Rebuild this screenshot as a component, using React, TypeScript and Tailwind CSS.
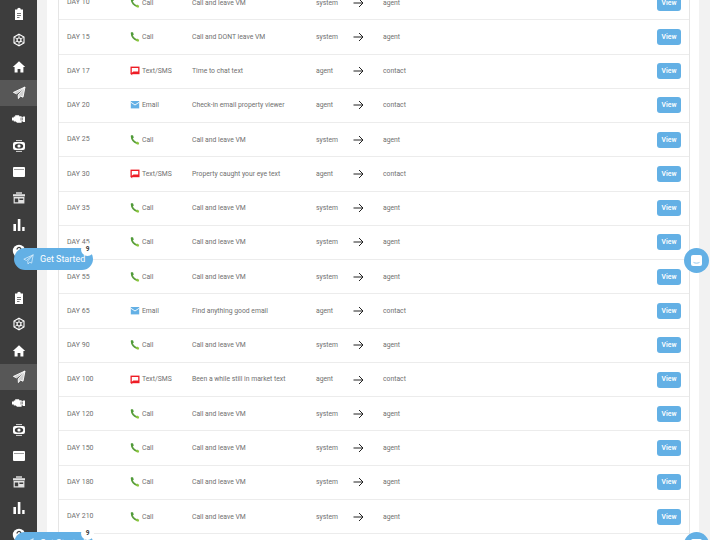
import React from 'react'

const rows = [
  ['DAY 10', 'call', 'Call and leave VM', 'system', 'agent'],
  ['DAY 15', 'call', 'Call and DONT leave VM', 'system', 'agent'],
  ['DAY 17', 'sms', 'Time to chat text', 'agent', 'contact'],
  ['DAY 20', 'email', 'Check-in email property viewer', 'agent', 'contact'],
  ['DAY 25', 'call', 'Call and leave VM', 'system', 'agent'],
  ['DAY 30', 'sms', 'Property caught your eye text', 'agent', 'contact'],
  ['DAY 35', 'call', 'Call and leave VM', 'system', 'agent'],
  ['DAY 45', 'call', 'Call and leave VM', 'system', 'agent'],
  ['DAY 55', 'call', 'Call and leave VM', 'system', 'agent'],
  ['DAY 65', 'email', 'Find anything good email', 'agent', 'contact'],
  ['DAY 90', 'call', 'Call and leave VM', 'system', 'agent'],
  ['DAY 100', 'sms', 'Been a while still in market text', 'agent', 'contact'],
  ['DAY 120', 'call', 'Call and leave VM', 'system', 'agent'],
  ['DAY 150', 'call', 'Call and leave VM', 'system', 'agent'],
  ['DAY 180', 'call', 'Call and leave VM', 'system', 'agent'],
  ['DAY 210', 'call', 'Call and leave VM', 'system', 'agent'],
]

const labels: Record<string, string> = { call: 'Call', sms: 'Text/SMS', email: 'Email' }

const TypeIcon = ({ type }: { type: string }) => {
  if (type === 'call') {
    return (
      <svg width="10" height="10" viewBox="0 0 10 10" fill="none" strokeLinecap="round">
        <path d="M1.6 1.4C1.8 4.6 3.8 7 7 8.2" stroke="#5a9e3c" strokeWidth="1.7" />
        <path d="M.8.4 3 .2 3.8 2.8 1.6 3.6Z" fill="#4f9a3a" />
        <path d="M5.8 8.2 7 6.4 9.2 7.8 8.8 9.4 7 9.4Z" fill="#8cc63f" />
      </svg>
    )
  }
  if (type === 'sms') {
    return (
      <svg width="10" height="10" viewBox="0 0 10 10">
        <rect x="0.5" y="0.6" width="9" height="7.6" fill="#ee1c25" />
        <path d="M1.8 2H8.2V5.6H3.4L1.8 6.8Z" fill="#fff" />
        <path d="M0.5 7.6 2.2 7.6V9.4Z" fill="#ee1c25" />
      </svg>
    )
  }
  return (
    <svg width="10" height="10" viewBox="0 0 10 10">
      <rect x="0.8" y="1" width="8.4" height="7.4" fill="#63b0e5" />
      <path d="M0.8 2.2 5 5 9.2 2.2" fill="none" stroke="#fff" strokeWidth="0.9" />
    </svg>
  )
}

const Arrow = () => (
  <svg width="11" height="10" viewBox="0 0 11 10" fill="none" stroke="#222" strokeWidth="1">
    <path d="M0.5 5H10M6 1l4 4-4 4" />
  </svg>
)

const navIcons = [
  // clipboard
  <g key="a"><path d="M3 2.5h2.2a1.8 1.8 0 0 1 3.6 0H11V13H3Z" fill="#fff" /><path d="M5 6.5h4M5 8.5h4M5 10.5h2.5" stroke="#3d3d3d" strokeWidth="0.7" /></g>,
  // hub
  <g key="b" fill="none" stroke="#fff"><path d="M7 1.2 12 4v6l-5 2.8L2 10V4Z" strokeWidth="1.1" /><circle cx="7" cy="7" r="2" strokeWidth="1.2" /><path d="M7 1v4M2 4l3.4 2M12 4 8.6 6M2 10l3.4-2M12 10 8.6 8M7 13V9" strokeWidth="0.8" /></g>,
  // home
  <path key="c" d="M7 1.2 13.2 7H11.4V12.6H8.4V9H5.6V12.6H2.6V7H0.8Z" fill="#fff" />,
  // plane
  <g key="d" fill="none" stroke="#fff" strokeWidth="0.9"><path d="M13 1 1.4 6.4l3.2 1.4L13 1 6.2 9l.2 3.6 2-2.6 2.6 1.2Z" fill="#cfcfcf" /></g>,
  // engine
  <g key="e"><path fill="#fff" d="M3.2 3.2h4v1h2.4v1h1.2v-.6h2.2v5.4h-2.2v-.8H9.6v1.6H5L3.8 9.4H1.8V8.4H0V5.4h1.8v-1h1.4Z" /><path d="M9 5.6v3M10.4 5.8v2.6" stroke="#3d3d3d" strokeWidth="0.6" /></g>,
  // eye
  <g key="f"><rect x="1" y="3" width="12" height="8" rx="2" fill="#fff" /><ellipse cx="7" cy="7" rx="4.2" ry="2.6" fill="#3d3d3d" /><circle cx="7" cy="7" r="1.6" fill="#fff" /><path d="M4 1.6h6M4 12.4h6" stroke="#fff" strokeWidth="0.8" /></g>,
  // window
  <path key="g" fillRule="evenodd" d="M2 2h10a1 1 0 0 1 1 1v8a1 1 0 0 1-1 1H2a1 1 0 0 1-1-1V3a1 1 0 0 1 1-1Zm0 2v.5h10V4Z" fill="#fff" />,
  // store
  <g key="h" fill="#fff"><path d="M4 1.4h6v1.2H4Z" /><path d="M1 3.2h12v2.2H1Z" opacity="0.85" /><path fillRule="evenodd" d="M1.6 6h10.8v6.6H1.6Zm1.2 1.4v3.8h3.4V7.4Zm4.6 0v1.6h3.8V7.4Z" opacity="0.85" /></g>,
  // bars
  <g key="i" fill="#fff"><rect x="1.4" y="6" width="2.6" height="7" /><rect x="5.8" y="1" width="2.6" height="12" /><rect x="10.2" y="9" width="2.4" height="4" /></g>,
  // help
  <g key="j"><circle cx="7" cy="7" r="6.2" fill="#fff" /><path d="M5 5.4a2 2 0 1 1 3 1.8c-.7.4-1 .8-1 1.6" fill="none" stroke="#3d3d3d" strokeWidth="1.3" /><circle cx="7" cy="10.6" r=".8" fill="#3d3d3d" /></g>,
]

const NavSet = () => (
  <div className="flex flex-col">
    {navIcons.map((icon, i) => (
      <div key={i} className={`h-[26.3px] flex items-center justify-center ${i === 3 ? 'bg-[#575757]' : ''}`}>
        <svg width="14" height="14" viewBox="0 0 14 14">{icon}</svg>
      </div>
    ))}
  </div>
)

const GetStarted = ({ top }: { top: string }) => (
  <div className={`absolute left-[14px] ${top} h-[22px] w-[79px] rounded-full bg-[#63b0e5] flex items-center pl-[9px] text-white text-[9px] font-['Roboto',sans-serif]`}>
    <svg width="11" height="11" viewBox="0 0 14 14" fill="none" stroke="#d8ecfa" strokeWidth="1" className="mr-[6px]">
      <path d="M13 1 1 6.6l3.4 1.6L13 1 6 9l.4 3.8 2-2.4 2.6 1.2Z" />
    </svg>
    <span className="pt-[2px]">Get Started</span>
    <span className="absolute -top-[5px] -right-[1px] w-[13px] h-[13px] rounded-full bg-white text-[#333] text-[6.5px] font-bold flex items-center justify-center">9</span>
  </div>
)

const ChatBubble = ({ top }: { top: string }) => (
  <div className={`absolute left-[684px] ${top} w-[25px] h-[25px] rounded-full bg-[#63b0e5] flex items-center justify-center`}>
    <svg width="13" height="13" viewBox="0 0 13 13">
      <rect x="1" y="1" width="11" height="11" rx="2" fill="#fff" />
      <path d="M3.5 8.4c1.6 1 4.4 1 6 0" fill="none" stroke="#63b0e5" strokeWidth="0.7" />
    </svg>
  </div>
)

export default function App() {
  return (
    <div className="relative w-[720px] h-[540px] overflow-hidden flex bg-white text-[6.8px] text-[#6f6f6f] font-['Roboto',sans-serif]">
      <div className="w-[37px] shrink-0 bg-[#3d3d3d] pt-[1px] flex flex-col gap-[21px]">
        <NavSet />
        <NavSet />
      </div>
      <div className="w-[10px] shrink-0 bg-[#f2f2f2]" />
      <div className="w-[652px] shrink-0 pl-[11px] pr-[9px]">
        <div className="-mt-[14px] border-l border-r border-[#e5e5e5]">
          {rows.map(([day, type, desc, from, to]) => (
            <div key={day} className="h-[34.27px] border-b-[1.5px] border-[#ececec] grid grid-cols-[63px_62px_124px_37px_30px_274px_auto] items-center pl-[8px]">
              <span className="text-[7px]">{day}</span>
              <span className="flex items-center gap-[2px]">
                <TypeIcon type={type} />
                {labels[type]}
              </span>
              <span>{desc}</span>
              <span>{from}</span>
              <Arrow />
              <span>{to}</span>
              <span className="w-[24px] h-[16px] rounded-[3px] bg-[#63b0e5] text-white font-semibold flex items-center justify-center">View</span>
            </div>
          ))}
        </div>
      </div>
      <div className="w-[11px] shrink-0 bg-[#f2f2f2]" />
      <GetStarted top="top-[248px]" />
      <GetStarted top="top-[532px]" />
      <ChatBubble top="top-[248px]" />
      <ChatBubble top="top-[532px]" />
    </div>
  )
}
